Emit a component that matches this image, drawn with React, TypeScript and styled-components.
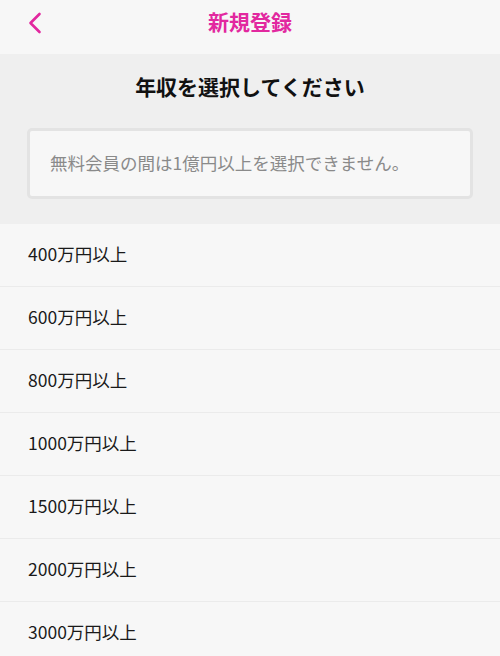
import { createGlobalStyle, styled } from 'styled-components';

const GlobalStyle = createGlobalStyle`
  html,
  body {
    margin: 0;
    padding: 0;
    overflow: hidden;
    background: #f7f7f7;
    font-family: 'Noto Sans CJK JP', 'Noto Sans', sans-serif;
  }
`;

const Page = styled.div`
  display: flex;
  flex-direction: column;
  width: 500px;
`;

const Header = styled.header`
  position: relative;
  display: flex;
  align-items: center;
  justify-content: center;
  height: 54px;
  background: #f7f7f7;
`;

const BackButton = styled.button`
  position: absolute;
  left: 24px;
  top: 10px;
  display: flex;
  align-items: center;
  justify-content: center;
  width: 22px;
  height: 26px;
  padding: 0;
  border: 0;
  background: none;
  cursor: pointer;
`;

const HeaderTitle = styled.h1`
  margin: 0;
  margin-top: -12px;
  font-size: 21px;
  font-weight: 700;
  color: #e2289f;
  line-height: 30px;
`;

const Intro = styled.section`
  display: flex;
  flex-direction: column;
  align-items: stretch;
  gap: 27px;
  padding: 17px 27px 25px;
  background: #efefef;
`;

const SectionTitle = styled.h2`
  margin: 0;
  text-align: center;
  font-size: 21px;
  font-weight: 700;
  line-height: 30px;
  color: #111;
`;

const Notice = styled.div`
  display: flex;
  align-items: center;
  height: 71px;
  box-sizing: border-box;
  padding: 0 20px 2px;
  border: 3px solid #e3e3e3;
  border-radius: 5px;
  background: #f7f7f7;
  font-size: 17.5px;
  color: #8a8a8a;
`;

const OptionList = styled.ul`
  margin: 0;
  padding: 0;
  list-style: none;
  background: #f7f7f7;
`;

const Option = styled.li`
  display: flex;
  align-items: center;
  box-sizing: border-box;
  height: 63px;
  padding: 0 0 3px 28px;
  border-bottom: 1px solid #ebebeb;
  font-size: 17.5px;
  color: #1a1a1a;
  cursor: pointer;
`;

const incomes = [400, 600, 800, 1000, 1500, 2000, 3000];

const ChevronLeft = () => (
  <svg width="14" height="22" viewBox="0 0 14 22" fill="none">
    <path
      d="M11.5 2 L2.5 11 L11.5 20"
      stroke="#e2289f"
      strokeWidth="2.6"
      strokeLinecap="round"
      strokeLinejoin="round"
    />
  </svg>
);

export default function App() {
  return (
    <Page>
      <GlobalStyle />
      <Header>
        <BackButton aria-label="戻る">
          <ChevronLeft />
        </BackButton>
        <HeaderTitle>新規登録</HeaderTitle>
      </Header>
      <Intro>
        <SectionTitle>年収を選択してください</SectionTitle>
        <Notice>無料会員の間は1億円以上を選択できません。</Notice>
      </Intro>
      <OptionList>
        {incomes.map((amount) => (
          <Option key={amount}>{amount}万円以上</Option>
        ))}
      </OptionList>
    </Page>
  );
}
